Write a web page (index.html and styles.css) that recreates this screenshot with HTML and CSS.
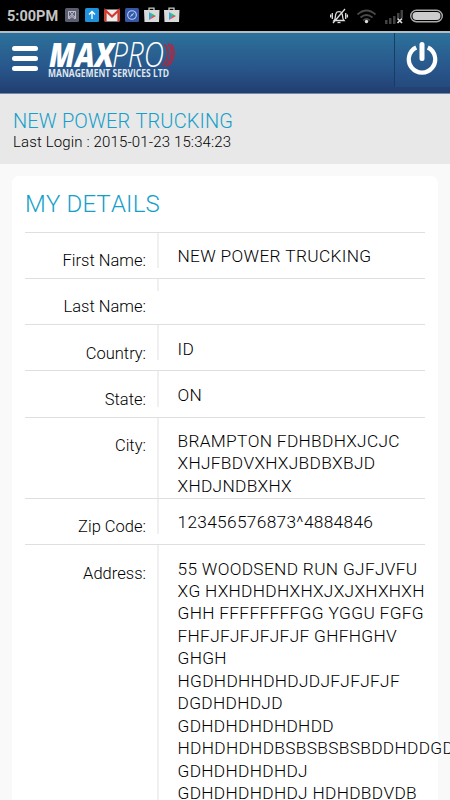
FILE: index.html
```html
<!DOCTYPE html>
<html lang="en">
<head>
<meta charset="utf-8">
<meta name="viewport" content="width=device-width">
<title>My Details</title>
<link rel="stylesheet" href="styles.css">
</head>
<body>
<div class="status">
  <span class="clock">5:00PM</span>
  <svg class="notifications" width="120" height="20" viewBox="0 0 120 20">
    <rect x="0" y="3" width="14" height="14" rx="1.5" fill="#5b5d73"/>
    <g fill="none" stroke="#c9cad4" stroke-width=".9"><path d="M5 13.500H3.500V6.500H10.500V13.500H9M5 7l3.300 4M9 7l-3.300 4"/><circle cx="5.400" cy="11.800" r="1"/><circle cx="8.600" cy="11.800" r="1"/></g>
    <rect x="20" y="3" width="14" height="14" rx="1.500" fill="#2091dc"/>
    <path d="M27 14V7M24 9.500l3-3 3 3" fill="none" stroke="#fff" stroke-width="1.400"/>
    <rect x="39.500" y="4.500" width="15" height="12" rx="1" fill="#eee"/>
    <path d="M40.500 16.500V5.500l6.500 6 6.500-6V16.500" fill="none" stroke="#d9392d" stroke-width="2.200"/>
    <rect x="60" y="3" width="14" height="14" rx="1.500" fill="#3457a8"/>
    <circle cx="67" cy="10" r="4.300" fill="none" stroke="#b9cdf5" stroke-width="1.100"/><path d="M64.500 12.500l2-3 3.300-2.300-2.300 3.300z" fill="#b9cdf5"/>
    <g id="store"><path d="M84 6V3.200h5V6" fill="none" stroke="#ccc" stroke-width="1.300"/><path d="M79 5h15.500l-.5 12h-14.500z" fill="#dadada"/><path d="M84 7l3.500 4-3.500 4z" fill="#29a9dc"/><path d="M84 7l7 4-3.500 0z" fill="#35b56b"/><path d="M84 15l7-4-3.500 0z" fill="#de4d55"/></g>
    <use href="#store" x="20"/>
  </svg>
  <svg class="system" width="116" height="20" viewBox="0 0 116 20">
    <g fill="none" stroke="#ddd" stroke-width="1.300"><path d="M4 14.500c2-2 1-5 2-7 1-2.500 5-2.500 6 0 1 2 0 5 2 7zM2.300 7v6M.6 8.500v3M15.700 7v6M17.400 8.500v3M3 17L15 3"/><path d="M7.500 16.500h3"/></g>
    <g fill="none" stroke="#494949" stroke-width="1.700"><path d="M27.500 8.500q9-8 18 0M30.500 11.500q6-5 12 0M33.200 14.300q3.300-2.800 6.600 0"/></g><circle cx="36.500" cy="15.500" r="1.700" fill="#ddd"/>
    <path d="M55 14h2.500v4H55zM59 12h2.500v6H59zM63 10h2.500v8H63zM67 7h2.500v5H67zM70.500 4H73v8h-2.500z" fill="#424242"/>
    <path d="M67.500 12.500l4.500 4.500m0-4.500l-4.500 4.500" stroke="#ddd" stroke-width="1.700"/>
    <rect x="80.700" y="4.200" width="31.600" height="11.600" rx="5.800" fill="none" stroke="#aaa" stroke-width="1.400"/><rect x="82.500" y="6" width="28" height="8" rx="4" fill="#ccc"/>
  </svg>
</div>
<header class="navbar">
  <div class="menu"><i></i><i></i><i></i></div>
  <svg class="logo" width="130" height="42" viewBox="0 0 130 42">
    <path d="M116.500 5.500q8 9-1.500 21M120 4.500q8.500 11-2.500 23M123 5q7 10-2 21.500" fill="none" stroke="#c51f33" stroke-width="1.400"/>
    <text class="logo-max" x="1" y="28" textLength="65" lengthAdjust="spacingAndGlyphs">MAX</text>
    <text class="logo-pro" x="64" y="28" textLength="52" lengthAdjust="spacingAndGlyphs">PRO</text>
    <text class="logo-sub" x="0" y="37.500" textLength="121" lengthAdjust="spacingAndGlyphs">MANAGEMENT SERVICES LTD</text>
  </svg>
  <div class="power"><svg width="32" height="36" viewBox="0 0 32 36"><path d="M10.200 7.500a13.200 13.200 0 1 0 11.600 0" fill="none" stroke="#fff" stroke-width="4.200"/><path d="M16 4.500v14" stroke="#fff" stroke-width="5" stroke-linecap="round"/></svg></div>
</header>
<section class="account">
  <div class="company">NEW POWER TRUCKING</div>
  <div class="login">Last Login : 2015-01-23 15:34:23</div>
</section>
<main class="card">
  <h1>MY DETAILS</h1>
  <dl>
    <div class="row"><dt>First Name:</dt><dd>NEW POWER TRUCKING</dd></div>
    <div class="row"><dt>Last Name:</dt><dd></dd></div>
    <div class="row"><dt>Country:</dt><dd>ID</dd></div>
    <div class="row"><dt>State:</dt><dd>ON</dd></div>
    <div class="row"><dt>City:</dt><dd>BRAMPTON FDHBDHXJCJC<br>XHJFBDVXHXJBDBXBJD<br>XHDJNDBXHX</dd></div>
    <div class="row"><dt>Zip Code:</dt><dd>123456576873^4884846</dd></div>
    <div class="row"><dt>Address:</dt><dd>55 WOODSEND RUN GJFJVFU<br>XG HXHDHDHXHXJXJXHXHXH<br>GHH FFFFFFFFGG YGGU FGFG<br>FHFJFJFJFJFJF GHFHGHV<br>GHGH<br>HGDHDHHDHDJDJFJFJFJF<br>DGDHDHDJD<br>GDHDHDHDHDHDD<br>HDHDHDHDBSBSBSBSBDDHDDGD<br>GDHDHDHDHDJ<br>GDHDHDHDHDJ HDHDBDVDB</dd></div>
  </dl>
</main>
</body>
</html>
```
FILE: styles.css
```css
* { box-sizing: border-box; }
html, body { height: 800px; overflow: hidden; }
body { margin: 0; background: #f9f9f9; font-family: Roboto, "Liberation Sans", sans-serif; font-weight: 300; font-kerning: none; color: #000; }
.status { height: 31px; background: #000; display: flex; align-items: center; padding: 0 0 0 7px; }
.clock { font-size: 14.5px; font-weight: 700; color: #c4c4c4; width: 58px; padding-top: 2px; }
.notifications { margin-top: -1px; }
.system { margin-left: 145px; }
.navbar { height: 63px; border-top: 2px solid #b5bdc4; border-bottom: 1px solid #7489a8; background: linear-gradient(#2c719b, #28558a 60%, #223e6f); display: flex; }
.menu { width: 26px; margin: 13px 0 0 12px; display: flex; flex-direction: column; gap: 5px; }
.menu i { height: 5px; border-radius: 2.5px; background: #fff; }
.logo { margin: 6px 0 0 10px; overflow: visible; }
.logo text { fill: #fff; font-family: "Open Sans", sans-serif; }
.logo .logo-max { font-size: 34px; font-weight: 800; font-style: italic; }
.logo .logo-pro { font-size: 34px; font-weight: 300; font-style: italic; }
.logo .logo-sub { font-size: 9.8px; font-weight: 700; fill: #dfe6ee; }
.power { margin-left: auto; width: 56px; height: 54px; border-left: 1px solid #153e65; padding: 7px 0 0 11px; background: linear-gradient(#2c719b, #28558a 68%, #254a7e); }
.account { height: 70px; background: #e8e8e8; padding: 15px 13px; }
.company { color: #159fc9; font-size: 20px; line-height: 24px; letter-spacing: .13px; font-weight: 300; }
.login { font-size: 15px; line-height: 19px; letter-spacing: .14px; }
.card { margin: 12px 12px 0; height: 624px; background: #fff; border-radius: 7px 7px 0 0; padding: 14px 13px 0; }
h1 { margin: 0; height: 41.5px; font-size: 24px; line-height: 28px; font-weight: 300; letter-spacing: .2px; color: #159fc9; }
dl { margin: 0; }
.row { border-top: 1px solid #dfdfdf; display: grid; grid-template-columns: 132px 268px; align-items: start; min-height: 46.25px; white-space: nowrap; }
dt { font-size: 16.5px; line-height: 22.45px; padding: 17.5px 11px 0 0; text-align: right; }
dd { margin: 0; border-left: 2px solid #f0f0f0; padding: 12.5px 0 0 18.5px; font-size: 17.3px; line-height: 22.45px; letter-spacing: .32px; }
dd:not(:empty) { padding-bottom: .4px; }
```
